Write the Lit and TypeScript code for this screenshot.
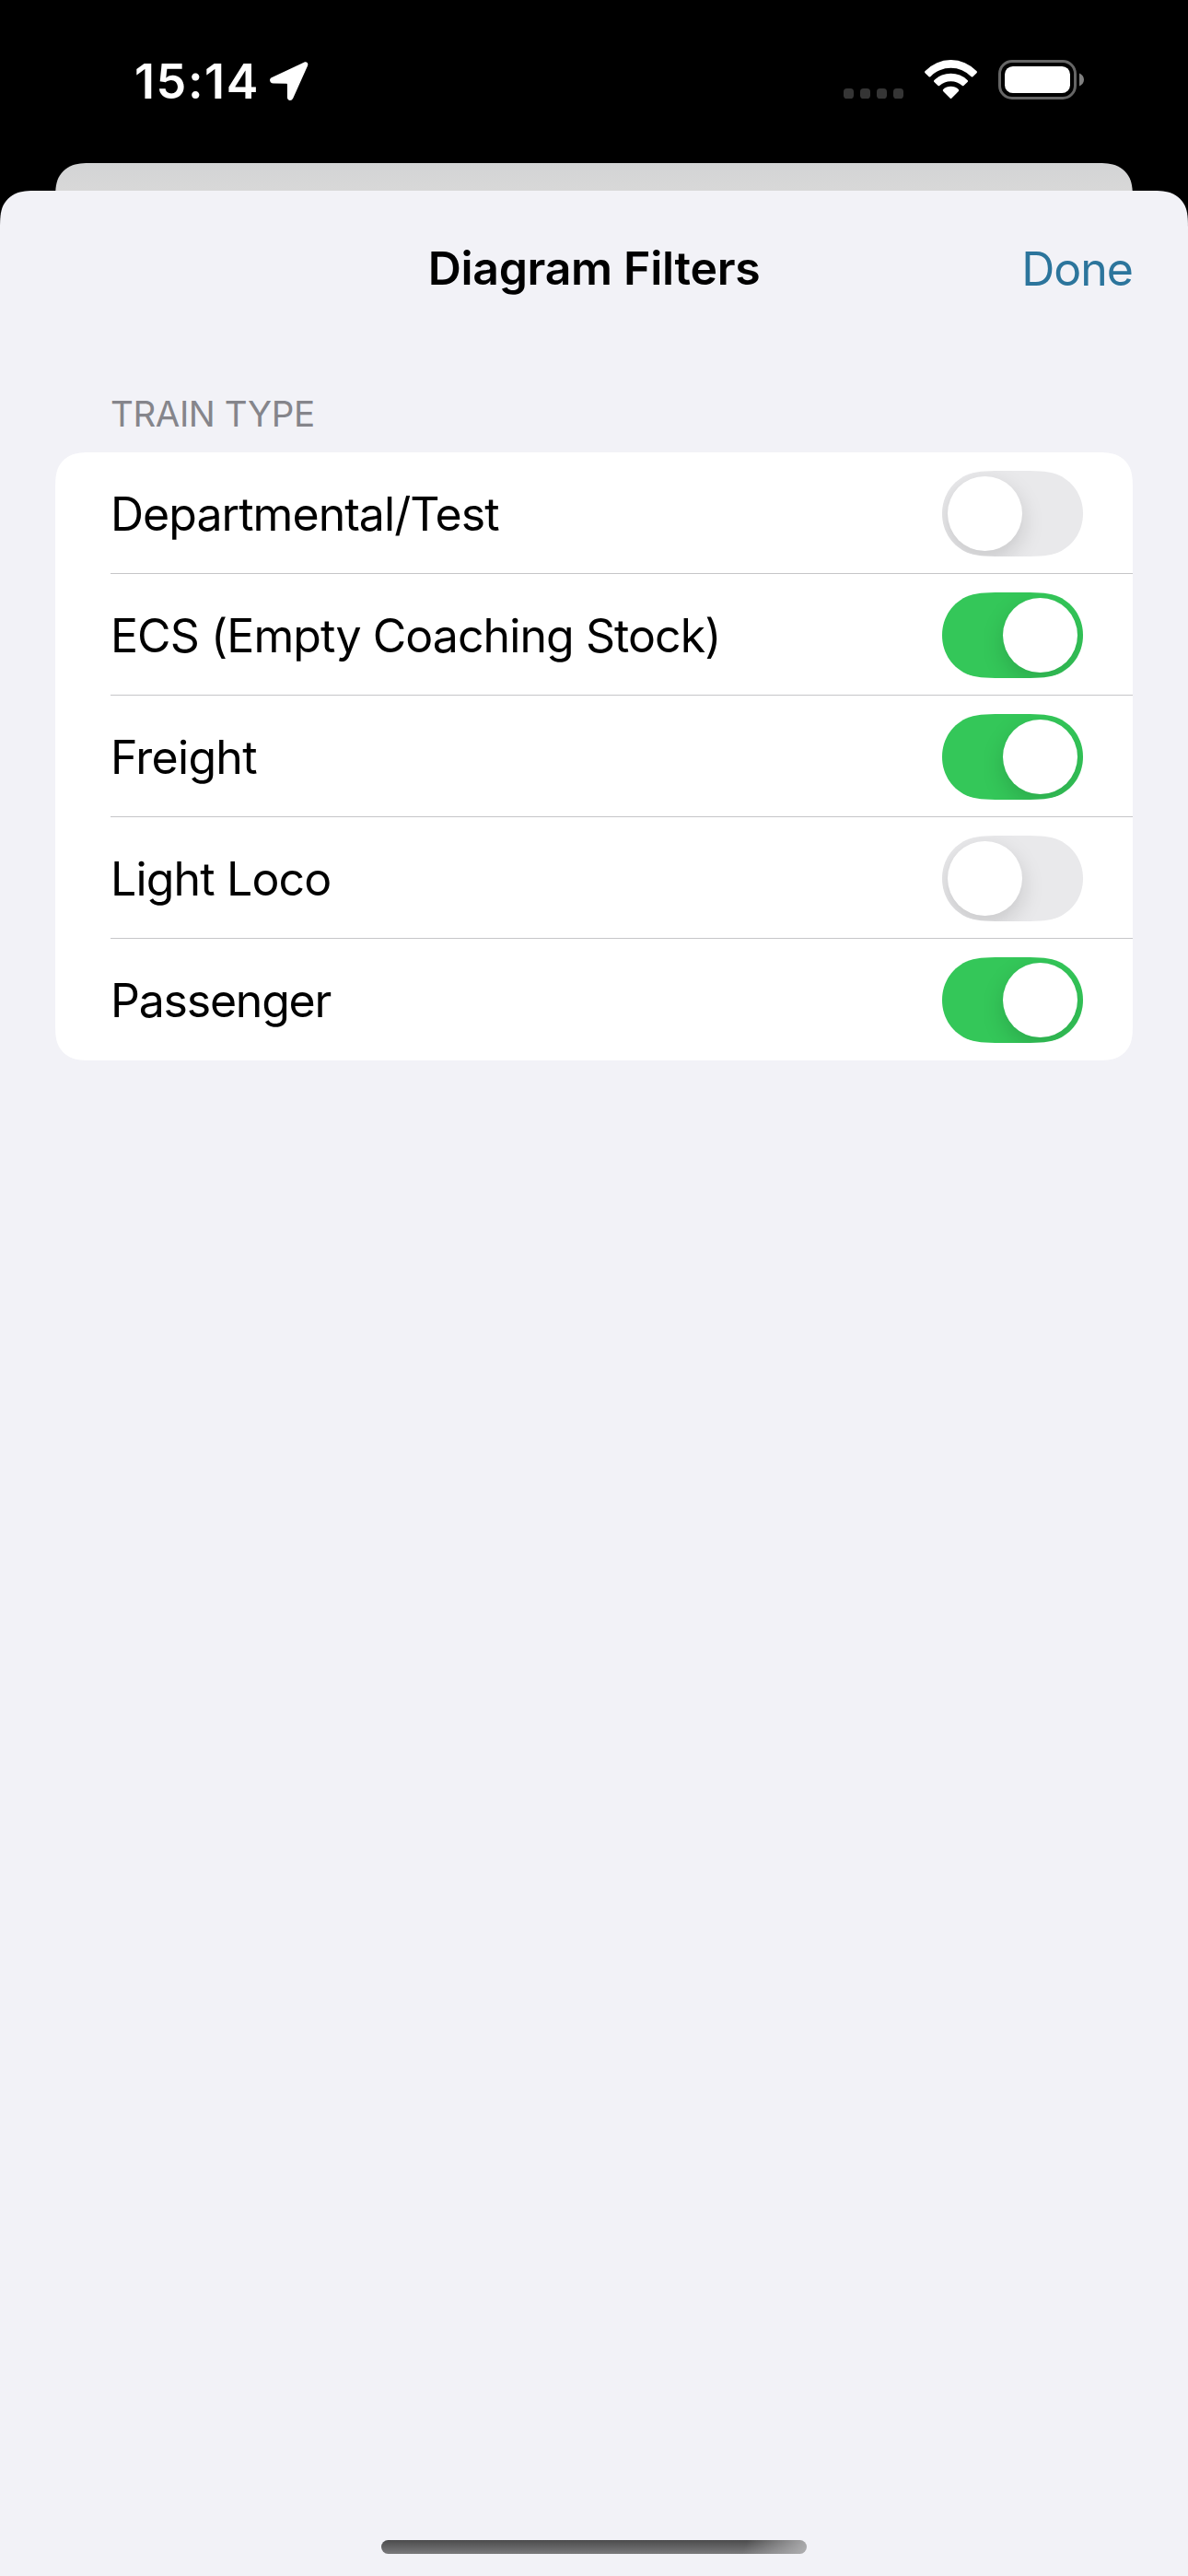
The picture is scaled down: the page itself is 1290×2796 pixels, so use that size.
import { LitElement, html, css, unsafeCSS } from "lit";
import { customElement, property, state } from "lit/decorators.js";
import { classMap } from "lit/directives/class-map.js";
import { styleMap } from "lit/directives/style-map.js";

/** Outline of a w×h box whose corners ease gradually into the edges. */
function smoothBox(w: number, h: number, r: number, bottom: boolean): string {
  const n = (v: number) => v.toFixed(2);
  const near = 0.07491 * r;
  const mid = 0.16906 * r;
  const far = 0.37282 * r;
  const in1 = 0.63149 * r;
  const in2 = 0.86841 * r;
  const in3 = 1.08849 * r;
  const edge = 1.52867 * r;
  const corner = (fx: (v: number) => number, fy: (v: number) => number, fromTop: boolean) => {
    const pts: Array<[number, number]> = [
      [edge, 0], [in3, 0], [in2, 0], [in1, near],
      [far, mid], [mid, far], [near, in1],
      [0, in2], [0, in3], [0, edge],
    ];
    const order = fromTop ? pts : [...pts].reverse();
    const p = order.map(([x, y]) => `${n(fx(x))} ${n(fy(y))}`);
    return `L${p[0]}C${p[1]} ${p[2]} ${p[3]}C${p[4]} ${p[5]} ${p[6]}C${p[7]} ${p[8]} ${p[9]}`;
  };
  const left = (v: number) => v;
  const right = (v: number) => w - v;
  const top = (v: number) => v;
  const base = (v: number) => h - v;
  const start = `M${n(w / 2)} 0`;
  const lower = bottom
    ? corner(right, base, false) + corner(left, base, true)
    : `L${w} ${h}L0 ${h}`;
  return start + corner(right, top, true) + lower + corner(left, top, false) + "Z";
}

const backShape = unsafeCSS(smoothBox(1170, 60, 30, false));
const sheetShape = unsafeCSS(smoothBox(1290, 2589, 30, false));
const cardShape = unsafeCSS(smoothBox(1170, 660, 30, true));

interface Filter {
  label: string;
  on: boolean;
  tracking: number;
}

@customElement("toggle-switch")
export class ToggleSwitch extends LitElement {
  @property({ type: Boolean }) on = false;

  static styles = css`
    :host {
      display: block;
      flex: none;
    }
    .track {
      display: flex;
      box-sizing: border-box;
      width: 153px;
      height: 93px;
      padding: 6px;
      background: #e9e9eb;
      clip-path: path(
        "M76.5 0H82C102 0 112.6 0 123.6 3.5C141.3 9.9 153 26.7 153 46.5C153 66.3 141.3 83.1 123.6 89.5C112.6 93 102 93 82 93H71C51 93 40.4 93 29.4 89.5C11.7 83.1 0 66.3 0 46.5C0 26.7 11.7 9.9 29.4 3.5C40.4 0 51 0 71 0Z"
      );
    }
    .track.on {
      justify-content: flex-end;
      background: #34c759;
    }
    .knob {
      width: 81px;
      height: 81px;
      border-radius: 50%;
      background: #fff;
      box-shadow: 0 9px 24px rgba(0, 0, 0, 0.15);
    }
  `;

  render() {
    return html`<div class=${classMap({ track: true, on: this.on })}><div class="knob"></div></div>`;
  }
}

@customElement("status-bar")
export class StatusBar extends LitElement {
  static styles = css`
    :host {
      display: flex;
      align-items: center;
      justify-content: space-between;
      box-sizing: border-box;
      height: 176px;
      padding: 0 112px 0 146px;
      color: #fff;
    }
    .left,
    .right {
      display: flex;
      align-items: center;
    }
    .left {
      gap: 11px;
    }
    .right {
      gap: 22px;
      padding-bottom: 2px;
    }
    .time {
      padding-top: 2px;
      font-size: 52px;
      font-weight: 580;
      line-height: 64px;
      letter-spacing: 1.6px;
    }
    svg {
      display: block;
    }
  `;

  render() {
    return html`
      <div class="left">
        <span class="time">15:14</span>
        <svg width="42" height="43" viewBox="0 0 42 43" fill="#fff">
          <path
            d="M1.8 17.3L37 .8C40 -.6 42.2 1.6 41 4.6L25.3 39.4C23.6 43.3 18.9 42.4 18.9 38.4V24.8C18.9 24 18.6 23.7 17.8 23.7L4 23.6C-.3 23.6 -1.2 18.7 1.8 17.3Z"
          />
        </svg>
      </div>
      <div class="right">
        <svg width="66" height="44" viewBox="0 0 66 44" fill="#353535">
          <rect x="0" y="31" width="11" height="11" rx="3.6" />
          <rect x="18" y="31" width="11" height="11" rx="3.6" />
          <rect x="36" y="31" width="11" height="11" rx="3.6" />
          <rect x="54" y="31" width="11" height="11" rx="3.6" />
        </svg>
        <svg width="58" height="44" viewBox="0 0 58 44" fill="#fff">
          <path
            d="M.5 14.2Q-.5 13 .7 12A38.2 38.2 0 0 1 56.3 12Q57.5 13 56.5 14.2L52.4 18.2Q51.6 19 50.7 18.2A30.7 30.7 0 0 0 6.3 18.2Q5.4 19 4.6 18.2Z"
          />
          <path
            d="M10.4 24Q9.4 23 10.5 22A25.8 25.8 0 0 1 46.5 22Q47.6 23 46.6 24L42.4 28Q41.7 28.7 40.9 28A18.7 18.7 0 0 0 16.1 28Q15.3 28.7 14.6 28Z"
          />
          <path
            d="M20.1 34Q19.2 33 20.2 32A12.1 12.1 0 0 1 36.8 32Q37.8 33 36.9 34L29.2 41.7Q28.5 42.3 27.8 41.7Z"
          />
        </svg>
        <svg width="94" height="44" viewBox="0 0 94 44">
          <rect x="1.5" y="1.5" width="82" height="40" rx="13.5" fill="none" stroke="#666" stroke-width="3" />
          <rect x="7" y="7" width="71" height="29" rx="8.8" fill="#fff" />
          <path d="M88 14.6C91 15.8 93 18.5 93 21.6C93 24.7 91 27.4 88 28.6Z" fill="#808080" />
        </svg>
      </div>
    `;
  }
}

@customElement("app-root")
export class AppRoot extends LitElement {
  @state() private filters: Filter[] = [
    { label: "Departmental/Test", on: false, tracking: -0.96 },
    { label: "ECS (Empty Coaching Stock)", on: true, tracking: -0.93 },
    { label: "Freight", on: true, tracking: -0.72 },
    { label: "Light Loco", on: false, tracking: -0.84 },
    { label: "Passenger", on: true, tracking: -1.22 },
  ];

  static styles = css`
    :host {
      display: flex;
      flex-direction: column;
      width: 1290px;
      height: 2796px;
      overflow: hidden;
      background: #000;
      font-family: Inter, "Liberation Sans", sans-serif;
      font-size: 50px;
      line-height: 60px;
      color: #000;
    }
    .back {
      flex: none;
      height: 60px;
      margin: 1px 60px -30px;
      background: linear-gradient(#d3d4d5, #d8d8d8 30px);
      clip-path: path("${backShape}");
    }
    .sheet {
      display: flex;
      flex: 1;
      flex-direction: column;
      z-index: 1;
      background: #f2f2f7;
      clip-path: path("${sheetShape}");
    }
    .header {
      display: grid;
      grid-template-columns: 1fr auto 1fr;
      align-items: center;
      height: 168px;
      padding: 0 60px;
    }
    .title {
      grid-column: 2;
      font-weight: 580;
      letter-spacing: -0.3px;
    }
    .done {
      justify-self: end;
      padding-top: 2px;
      letter-spacing: -1px;
      color: #2c759c;
    }
    .filters {
      display: flex;
      flex-direction: column;
      gap: 18px;
      padding: 50px 60px 0;
    }
    .caption {
      padding-left: 60px;
      font-size: 38.5px;
      line-height: 48px;
      letter-spacing: -0.42px;
      color: #85858b;
    }
    .card {
      padding-left: 60px;
      background: #fff;
      clip-path: path("${cardShape}");
    }
    .row {
      display: flex;
      align-items: center;
      justify-content: space-between;
      box-sizing: border-box;
      height: 132px;
      padding: 20px 54px 18px 0;
      border-bottom: 1px solid #c6c6c8;
    }
    .row:last-child {
      border-bottom-color: transparent;
    }
    .footer {
      display: flex;
      justify-content: center;
      margin-top: auto;
      padding-bottom: 24px;
    }
    .indicator {
      width: 462px;
      height: 15px;
      border-radius: 8px;
      background: linear-gradient(110deg, rgba(178, 178, 180, 0) 85%, rgba(178, 178, 180, 0.95) 100%),
        linear-gradient(#4b4b4c, #7a7a7c);
    }
  `;

  private toggle(index: number) {
    this.filters = this.filters.map((f, i) => (i === index ? { ...f, on: !f.on } : f));
  }

  render() {
    return html`
      <status-bar></status-bar>
      <div class="back"></div>
      <div class="sheet">
        <div class="header">
          <span class="title">Diagram Filters</span>
          <span class="done">Done</span>
        </div>
        <div class="filters">
          <div class="caption">TRAIN TYPE</div>
          <div class="card">
            ${this.filters.map(
              (f, i) => html`
                <div class="row">
                  <span style=${styleMap({ letterSpacing: `${f.tracking}px` })}>${f.label}</span>
                  <toggle-switch .on=${f.on} @click=${() => this.toggle(i)}></toggle-switch>
                </div>
              `,
            )}
          </div>
        </div>
        <div class="footer"><div class="indicator"></div></div>
      </div>
    `;
  }
}
